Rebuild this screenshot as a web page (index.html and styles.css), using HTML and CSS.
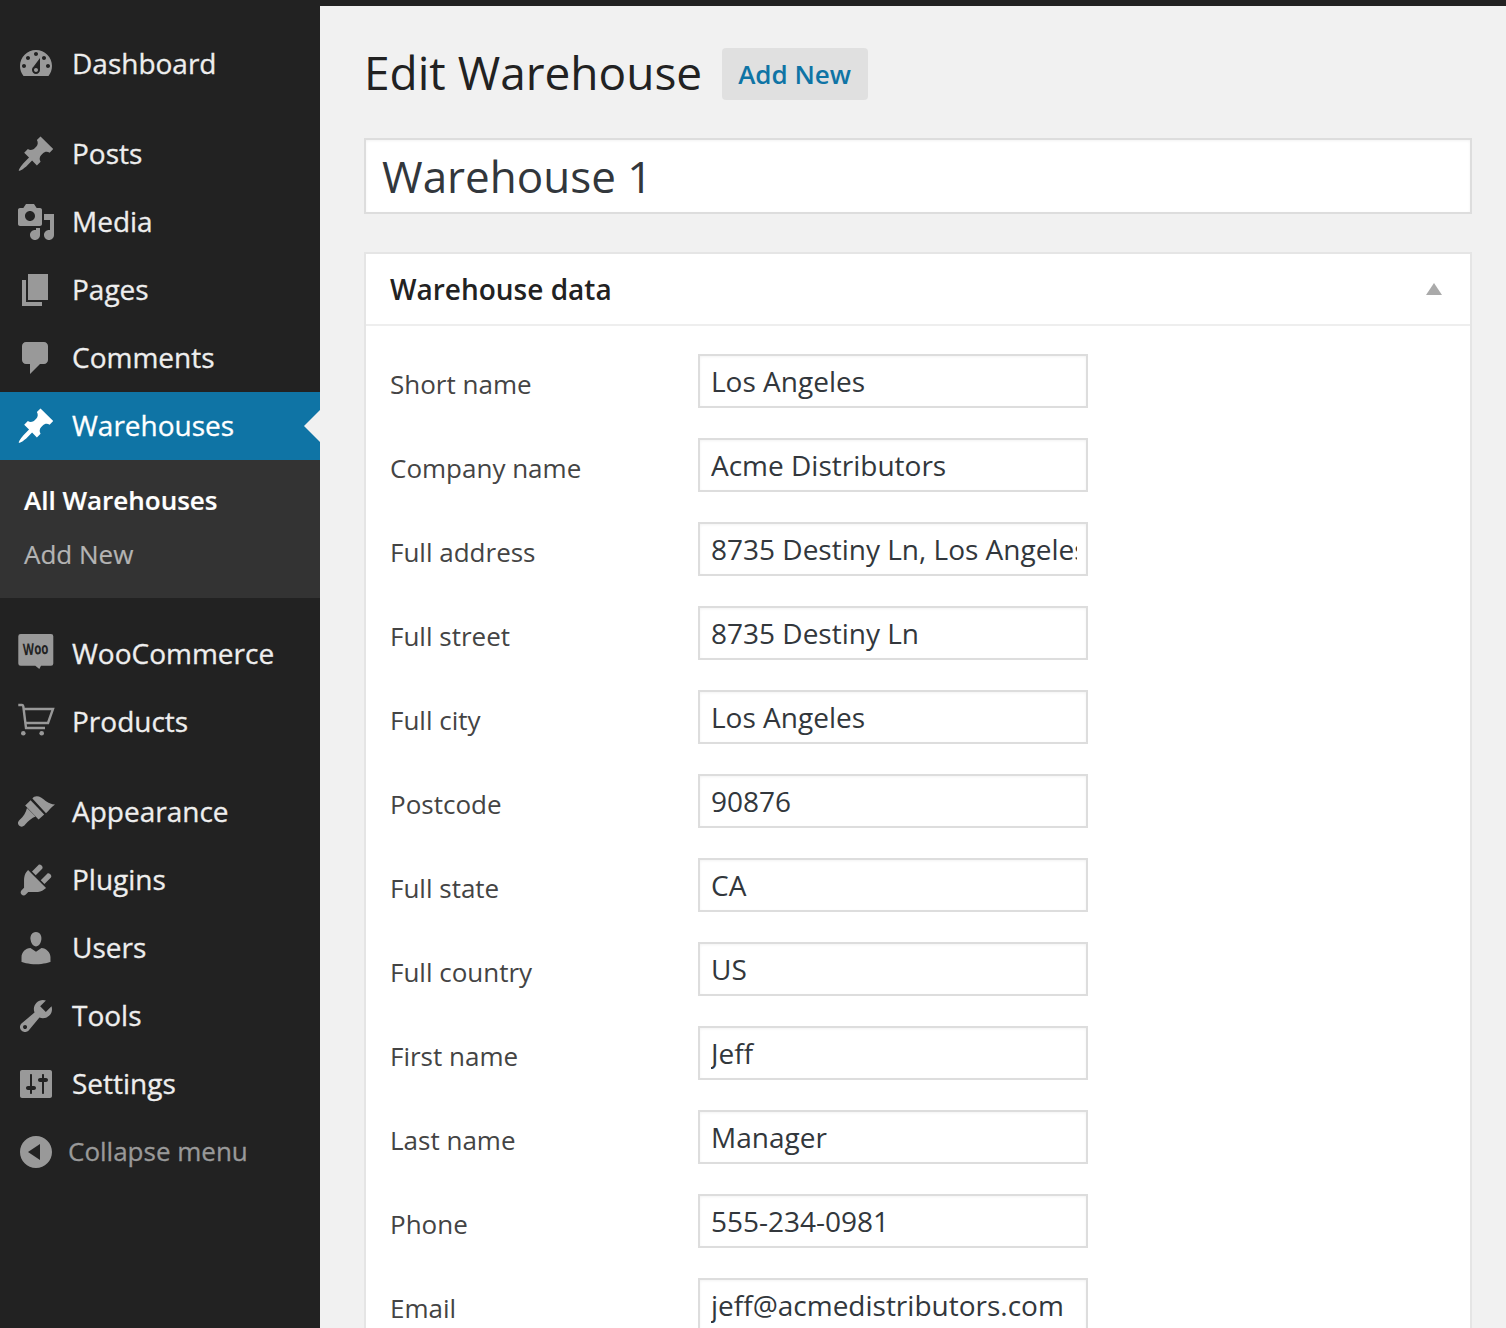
FILE: index.html
```html
<!DOCTYPE html>
<html lang="en">
<head>
    <meta charset="UTF-8">
    <meta name="viewport" content="width=device-width, initial-scale=1.0">
    <title>Edit Warehouse</title>
    <link rel="stylesheet" href="styles.css">
</head>
<body>
    <div class="wrap">
        <nav class="sidebar">
            <a class="menu-item" href="#">
                <svg class="icon" viewBox="0 0 20 20"><path d="M3.76 16h12.48c1.1-1.37 1.76-3.11 1.76-5 0-4.42-3.58-8-8-8s-8 3.58-8 8c0 1.89.66 3.63 1.76 5zM10 4c.55 0 1 .45 1 1s-.45 1-1 1-1-.45-1-1 .45-1 1-1zM6 6c.55 0 1 .45 1 1s-.45 1-1 1-1-.45-1-1 .45-1 1-1zm8 0c.55 0 1 .45 1 1s-.45 1-1 1-1-.45-1-1 .45-1 1-1zm-5.37 5.55L12 7v6c0 1.1-.9 2-2 2s-2-.9-2-2c0-.57.24-1.08.63-1.45zM4 10c.55 0 1 .45 1 1s-.45 1-1 1-1-.45-1-1 .45-1 1-1zm12 0c.55 0 1 .45 1 1s-.45 1-1 1-1-.45-1-1 .45-1 1-1zm-5 3c0-.55-.45-1-1-1s-1 .45-1 1 .45 1 1 1 1-.45 1-1z" fill-rule="evenodd"/></svg>
                <span>Dashboard</span>
            </a>
            <div class="menu-sep"></div>
            <a class="menu-item" href="#">
                <svg class="icon" viewBox="0 0 20 20"><path d="M10.44 3.02l1.82-1.82 6.36 6.35-1.83 1.82c-1.05-.68-2.48-.57-3.41.36l-.75.75c-.92.93-1.04 2.35-.35 3.41l-1.83 1.82-2.41-2.41-2.8 2.79c-.42.42-3.38 2.71-3.8 2.29s1.86-3.39 2.28-3.81l2.79-2.79L4.1 9.36l1.83-1.82c1.05.69 2.48.57 3.41-.36l.75-.75c.93-.92 1.04-2.35.35-3.41z"/></svg>
                <span>Posts</span>
            </a>
            <a class="menu-item" href="#">
                <svg class="icon" viewBox="0 0 20 20"><path d="M13 11V4c0-.55-.45-1-1-1h-1.67L9 1H5L3.67 3H2c-.55 0-1 .45-1 1v7c0 .55.45 1 1 1h10c.55 0 1-.45 1-1zM7 4.5c1.38 0 2.5 1.12 2.5 2.5S8.38 9.5 7 9.5 4.5 8.38 4.5 7 5.62 4.5 7 4.5zM14 6h5v10.5c0 1.38-1.12 2.5-2.5 2.5S14 17.88 14 16.5s1.12-2.5 2.5-2.5c.17 0 .34.02.5.05V9h-3V6zm-4 8.05V13h2v3.5c0 1.38-1.12 2.5-2.5 2.5S7 17.88 7 16.5 8.12 14 9.5 14c.17 0 .34.02.5.05z" fill-rule="evenodd"/></svg>
                <span>Media</span>
            </a>
            <a class="menu-item" href="#">
                <svg class="icon" viewBox="0 0 20 20"><path d="M6 15V2h10v13H6zm-1 1h8v2H3V5h2v11z"/></svg>
                <span>Pages</span>
            </a>
            <a class="menu-item" href="#">
                <svg class="icon" viewBox="0 0 20 20"><path d="M5 2h9c1.1 0 2 .9 2 2v7c0 1.1-.9 2-2 2h-2l-5 5v-5H5c-1.1 0-2-.9-2-2V4c0-1.1.9-2 2-2z"/></svg>
                <span>Comments</span>
            </a>
            <a class="menu-item current" href="#">
                <svg class="icon" viewBox="0 0 20 20"><path d="M10.44 3.02l1.82-1.82 6.36 6.35-1.83 1.82c-1.05-.68-2.48-.57-3.41.36l-.75.75c-.92.93-1.04 2.35-.35 3.41l-1.83 1.82-2.41-2.41-2.8 2.79c-.42.42-3.38 2.71-3.8 2.29s1.86-3.39 2.28-3.81l2.79-2.79L4.1 9.36l1.83-1.82c1.05.69 2.48.57 3.41-.36l.75-.75c.93-.92 1.04-2.35.35-3.41z"/></svg>
                <span>Warehouses</span>
            </a>
            <div class="submenu">
                <a class="sub-item active" href="#">All Warehouses</a>
                <a class="sub-item" href="#">Add New</a>
            </div>
            <div class="menu-sep"></div>
            <a class="menu-item" href="#">
                <svg class="icon" viewBox="0 0 40 40">
                    <path d="M4.500 0h30.500a2.300 2.300 0 0 1 2.300 2.300v27.100a2.300 2.300 0 0 1-2.300 2.300h-10l-1.700 3.300-4-3.300H4.600a2.300 2.300 0 0 1-2.300-2.300V2.300A2.300 2.300 0 0 1 4.600 0z"/>
                    <text class="woo-text" transform="translate(20 20.500) rotate(-3) scale(1 1.400)" text-anchor="middle">Woo</text>
                </svg>
                <span>WooCommerce</span>
            </a>
            <a class="menu-item" href="#">
                <svg class="icon" viewBox="0 0 40 40">
                    <path class="cart-line" d="M2.300 3H6c.8 0 1.100.5 1.300 1.300L10 26h19M7.800 7H37l-5 14H9"/>
                    <circle cx="7.300" cy="31.300" r="2.300"/>
                    <circle cx="25.700" cy="31.300" r="2.300"/>
                </svg>
                <span>Products</span>
            </a>
            <div class="menu-sep"></div>
            <a class="menu-item" href="#">
                <svg class="icon" viewBox="0 0 20 20">
                    <path d="M8.200 3.200C9 1.900 11 1.800 12.500 2.700c2 1.200 3.500 3.300 7 3.500-1.700 1.200-3.200 3.100-4.500 4.400z"/>
                    <path d="M7.300 4.100l6.800 7.200-2.800 2.500-6.700-7z"/>
                    <path d="M5.500 8l4.300 4.300c-1.800.7-3.800 2.200-5.200 4-.8 1.100-2.200 1.400-3.100.5-.9-.9-.6-2.100.5-3C3.600 12.500 5 10.200 5.500 8z"/>
                </svg>
                <span>Appearance</span>
            </a>
            <a class="menu-item" href="#">
                <svg class="icon" viewBox="0 0 20 20"><path d="M13.11 4.360L9.870 7.600 8 5.730l3.240-3.240c.35-.34 1.050-.2 1.560.32.52.51.66 1.210.31 1.550zm-8 1.770l.91-1.120 9.010 9.010-1.190.84c-.71.71-2.630 1.160-3.820 1.160H6.140L4.900 17.260c-.59.59-1.540.59-2.120 0-.59-.58-.59-1.530 0-2.120l1.240-1.240v-3.880c0-1.130.4-3.190 1.090-3.890zm7.260 3.970l3.240-3.240c.34-.35 1.040-.21 1.550.31.52.51.66 1.210.31 1.550l-3.240 3.250z"/></svg>
                <span>Plugins</span>
            </a>
            <a class="menu-item" href="#">
                <svg class="icon" viewBox="0 0 20 20"><path d="M10 9.250c-2.270 0-2.730-3.440-2.730-3.440C7 4.020 7.820 2 9.970 2c2.160 0 2.980 2.020 2.710 3.810 0 0-.41 3.440-2.680 3.440zm0 2.570L12.720 10c2.390 0 4.520 2.330 4.520 4.530v2.490s-3.650 1.130-7.240 1.130c-3.650 0-7.240-1.130-7.240-1.130v-2.490c0-2.250 1.940-4.480 4.470-4.480z"/></svg>
                <span>Users</span>
            </a>
            <a class="menu-item" href="#">
                <svg class="icon" viewBox="0 0 20 20"><path d="M16.680 9.770c-1.340 1.340-3.300 1.670-4.950.99l-5.410 6.520c-.99.99-2.590.99-3.580 0s-.99-2.590 0-3.570l6.520-5.420c-.68-1.650-.35-3.610.99-4.950 1.280-1.280 3.120-1.620 4.720-1.060l-2.890 2.890 2.820 2.820 2.860-2.870c.53 1.580.18 3.390-1.080 4.650zM3.810 16.210c.4.39 1.040.39 1.430 0 .4-.4.4-1.040 0-1.430-.39-.4-1.030-.4-1.430 0-.39.39-.39 1.030 0 1.430z" fill-rule="evenodd"/></svg>
                <span>Tools</span>
            </a>
            <a class="menu-item" href="#">
                <svg class="icon" viewBox="0 0 20 20"><path d="M18 16V4c0-.55-.45-1-1-1H3c-.55 0-1 .45-1 1v12c0 .55.45 1 1 1h14c.55 0 1-.45 1-1zM8 11h1c.55 0 1 .45 1 1s-.45 1-1 1H8v1.500c0 .28-.22.5-.5.5s-.5-.22-.5-.5V13H6c-.55 0-1-.45-1-1s.45-1 1-1h1V5.500c0-.28.22-.5.5-.5s.5.22.5.5V11zm5-2h-1c-.55 0-1-.45-1-1s.45-1 1-1h1V5.500c0-.28.22-.5.5-.5s.5.22.5.5V7h1c.55 0 1 .45 1 1s-.45 1-1 1h-1v5.500c0 .28-.22.5-.5.5s-.5-.22-.5-.5V9z" fill-rule="evenodd"/></svg>
                <span>Settings</span>
            </a>
            <a class="menu-item collapse" href="#">
                <svg class="icon" viewBox="0 0 20 20"><path d="M10 2c-4.420 0-8 3.580-8 8s3.580 8 8 8 8-3.580 8-8-3.580-8-8-8zm2 12l-6-4 6-4z" fill-rule="evenodd"/></svg>
                <span>Collapse menu</span>
            </a>
        </nav>

        <main class="content">
            <div class="page-head">
                <h1>Edit Warehouse</h1>
                <a class="add-new" href="#">Add New</a>
            </div>

            <input class="title-input" type="text" value="Warehouse 1">

            <section class="postbox">
                <div class="postbox-head">
                    <h2>Warehouse data</h2>
                    <span class="toggle"></span>
                </div>
                <div class="fields">
                    <label class="field"><span>Short name</span><input type="text" value="Los Angeles"></label>
                    <label class="field"><span>Company name</span><input type="text" value="Acme Distributors"></label>
                    <label class="field"><span>Full address</span><input type="text" value="8735 Destiny Ln, Los Angeles, CA 90876"></label>
                    <label class="field"><span>Full street</span><input type="text" value="8735 Destiny Ln"></label>
                    <label class="field"><span>Full city</span><input type="text" value="Los Angeles"></label>
                    <label class="field"><span>Postcode</span><input type="text" value="90876"></label>
                    <label class="field"><span>Full state</span><input type="text" value="CA"></label>
                    <label class="field"><span>Full country</span><input type="text" value="US"></label>
                    <label class="field"><span>First name</span><input type="text" value="Jeff"></label>
                    <label class="field"><span>Last name</span><input type="text" value="Manager"></label>
                    <label class="field"><span>Phone</span><input type="text" value="555-234-0981"></label>
                    <label class="field"><span>Email</span><input type="text" value="jeff@acmedistributors.com"></label>
                </div>
            </section>
        </main>
    </div>
</body>
</html>
```

FILE: styles.css
```css
html, body {
    margin: 0;
    height: 100%;
    overflow: hidden;
}
body {
    font-family: "Open Sans", sans-serif;
    background-color: #f1f1f1;
    color: #444;
}
a {
    text-decoration: none;
}
.wrap {
    display: flex;
    height: 100vh;
    box-sizing: border-box;
    border-top: 6px solid #222;
    overflow: hidden;
}

/* sidebar */
.sidebar {
    flex: 0 0 320px;
    box-sizing: border-box;
    padding-top: 24px;
    background-color: #222;
}
.menu-item {
    display: flex;
    align-items: center;
    gap: 16px;
    height: 68px;
    padding-left: 16px;
    font-size: 28px;
    color: #eee;
}
.menu-item span {
    padding-bottom: 2px;
    -webkit-text-stroke: 0.3px;
}
.icon {
    flex: 0 0 40px;
    width: 40px;
    height: 40px;
    fill: #999;
}
.menu-sep {
    height: 22px;
}
.menu-item.current {
    position: relative;
    background-color: #0f74a5;
    color: #fff;
}
.menu-item.current .icon {
    fill: #fff;
}
.menu-item.current::after {
    content: "";
    position: absolute;
    right: 0;
    top: 18px;
    border: 16px solid transparent;
    border-right-color: #f1f1f1;
    border-left-width: 0;
}
.submenu {
    display: flex;
    flex-direction: column;
    height: 138px;
    box-sizing: border-box;
    padding: 14px 0 0 24px;
    background-color: #333;
}
.sub-item {
    height: 54px;
    line-height: 52px;
    font-size: 26px;
    color: #b4b4b4;
    -webkit-text-stroke: 0.2px;
}
.sub-item.active {
    font-weight: 600;
    color: #fff;
}
.woo-text {
    font-family: "Open Sans", sans-serif;
    font-size: 11.5px;
    font-weight: 700;
    fill: #222;
}
.cart-line {
    fill: none;
    stroke: #999;
    stroke-width: 2.4;
}
.collapse {
    gap: 12px;
    font-size: 26px;
    color: #999;
}

/* main column */
.content {
    flex: 1;
    min-width: 0;
    padding: 0 34px 0 44px;
}
.page-head {
    display: flex;
    align-items: center;
    gap: 20px;
    height: 132px;
    padding-top: 4px;
    box-sizing: border-box;
}
h1 {
    margin: 0;
    padding-bottom: 4px;
    font-size: 46px;
    font-weight: 400;
    color: #222;
}
.add-new {
    padding: 0 17px 0 16px;
    height: 52px;
    line-height: 52px;
    font-size: 26px;
    font-weight: 600;
    color: #0f74a5;
    background-color: #e0e0e0;
    border-radius: 4px;
}
.title-input {
    display: block;
    width: 100%;
    height: 76px;
    box-sizing: border-box;
    padding: 0 16px;
    font-family: inherit;
    font-size: 44px;
    color: #32373c;
    background-color: #fff;
    border: 2px solid #ddd;
    box-shadow: inset 0 1px 3px rgba(0,0,0,0.05);
    outline: none;
}
.postbox {
    margin-top: 38px;
    background-color: #fff;
    border: 2px solid #e5e5e5;
    border-bottom: none;
}
.postbox-head {
    display: flex;
    align-items: center;
    justify-content: space-between;
    height: 70px;
    padding: 0 28px 0 24px;
    border-bottom: 2px solid #eee;
}
h2 {
    margin: 0;
    font-size: 28px;
    font-weight: 600;
    color: #222;
}
.toggle {
    border: 8px solid transparent;
    border-top-width: 0;
    border-bottom: 12px solid #aaa;
}
.fields {
    display: flex;
    flex-direction: column;
    gap: 30px;
    padding: 28px 0 30px 24px;
}
.field {
    display: flex;
    align-items: center;
    font-size: 26px;
    color: #444;
}
.field span {
    flex: 0 0 308px;
    padding-top: 6px;
}
.field input {
    width: 390px;
    height: 54px;
    box-sizing: border-box;
    padding: 0 9px 0 11px;
    font-family: inherit;
    font-size: 28px;
    color: #32373c;
    background-color: #fff;
    border: 2px solid #ddd;
    box-shadow: inset 0 1px 3px rgba(0,0,0,0.05);
    outline: none;
}
```
